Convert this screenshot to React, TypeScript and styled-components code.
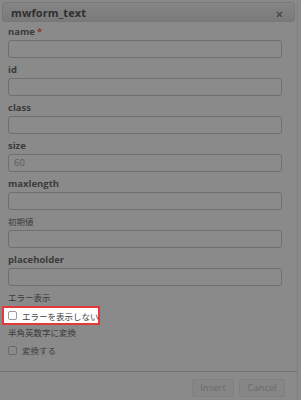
import React from 'react';
import styled, { createGlobalStyle } from 'styled-components';

const GlobalStyle = createGlobalStyle`
	html, body {
		margin: 0;
		padding: 0;
		background: #8a8a8a;
	}
	body {
		font-family: "Open Sans", "Noto Sans CJK JP", sans-serif;
	}
`;

const Dialog = styled.div`
	width: 298px;
	height: 400px;
	box-sizing: border-box;
	border-right: 1px solid #7e7e7e;
	background: #8a8a8a;
`;

const TitleBar = styled.div`
	margin: 2px 2px 0 2px;
	height: 20px;
	box-sizing: border-box;
	display: flex;
	align-items: center;
	justify-content: space-between;
	padding: 0 10px 0 8px;
	border: 1px solid #777;
	border-radius: 3px;
	background: linear-gradient(#858585, #7a7a7a);
`;

const Title = styled.span`
	font-size: 11px;
	font-weight: bold;
	color: #2f2f2f;
	letter-spacing: 0.1px;
`;

const CloseBtn = styled.div`
	width: 10px;
	height: 10px;
	display: flex;
	align-items: center;
	justify-content: center;
	background: #7f7f7f;
	border-radius: 2px;
	margin-top: 4px;
`;

const Body = styled.div`
	padding: 3px 15px 0 8px;
`;

const Label = styled.div<{ $jp?: boolean }>`
	height: 14px;
	line-height: 14px;
	margin-bottom: 1px;
	font-size: ${p => (p.$jp ? '8.5px' : '9.5px')};
	font-weight: ${p => (p.$jp ? 'normal' : 'bold')};
	color: #3a3a3a;
	white-space: nowrap;
`;

const Required = styled.span`
	color: #8c3b3b;
	margin-left: 2px;
`;

const Input = styled.div`
	height: 18px;
	box-sizing: border-box;
	border: 1px solid #6f6f6f;
	border-radius: 3px;
	background: #8b8b8b;
	margin-bottom: 5px;
	padding-left: 5px;
	font-size: 9.5px;
	line-height: 16px;
	color: #5c5c5c;
`;

const Highlight = styled.div`
	margin: 0 0 0 -6px;
	width: 98px;
	height: 19px;
	box-sizing: border-box;
	border: 2px solid #e03a3a;
	background: #fff;
	display: flex;
	align-items: center;
	padding-left: 4px;
	gap: 5px;
`;

const CheckRow = styled.div`
	display: flex;
	align-items: center;
	gap: 5px;
	height: 18px;
`;

const Box = styled.span<{ $light?: boolean }>`
	flex: none;
	width: 9px;
	height: 9px;
	box-sizing: border-box;
	border: 1px solid ${p => (p.$light ? '#9a9a9a' : '#6a6a6a')};
	border-radius: 2px;
	background: ${p => (p.$light ? '#fff' : '#8a8a8a')};
`;

const CheckText = styled.span<{ $light?: boolean }>`
	font-size: 8.5px;
	white-space: nowrap;
	color: ${p => (p.$light ? '#444' : '#3e3e3e')};
`;

const Footer = styled.div`
	margin-top: 12px;
	border-top: 1px solid #717171;
	display: flex;
	justify-content: flex-end;
	gap: 5px;
	padding: 7px 12px 0 0;
`;

const Button = styled.div<{ $w: number }>`
	width: ${p => p.$w}px;
	height: 18px;
	box-sizing: border-box;
	border: 1px solid #7f7f7f;
	border-radius: 2px;
	background: #868686;
	font-size: 9.5px;
	line-height: 16px;
	text-align: center;
	color: #6a6a6a;
`;

const fields = ['id', 'class', 'size', 'maxlength', '初期値', 'placeholder'];

const App = () => {
	return (
		<>
			<GlobalStyle />
			<Dialog>
				<TitleBar>
					<Title>mwform_text</Title>
					<CloseBtn>
						<svg width="7" height="7" viewBox="0 0 7 7">
							<path d="M1 1L6 6M6 1L1 6" stroke="#4a4a4a" strokeWidth="1.6" />
						</svg>
					</CloseBtn>
				</TitleBar>
				<Body>
					<Label>
						name<Required>*</Required>
					</Label>
					<Input />
					{fields.map(f => (
						<React.Fragment key={f}>
							<Label $jp={f === '初期値'}>{f}</Label>
							<Input>{f === 'size' ? '60' : ''}</Input>
						</React.Fragment>
					))}
					<Label $jp>エラー表示</Label>
					<Highlight>
						<Box $light />
						<CheckText $light>エラーを表示しない</CheckText>
					</Highlight>
					<Label $jp style={{ marginTop: 1 }}>半角英数字に変換</Label>
					<CheckRow>
						<Box />
						<CheckText>変換する</CheckText>
					</CheckRow>
				</Body>
				<Footer>
					<Button $w={42}>Insert</Button>
					<Button $w={46}>Cancel</Button>
				</Footer>
			</Dialog>
		</>
	);
};

export default App;
